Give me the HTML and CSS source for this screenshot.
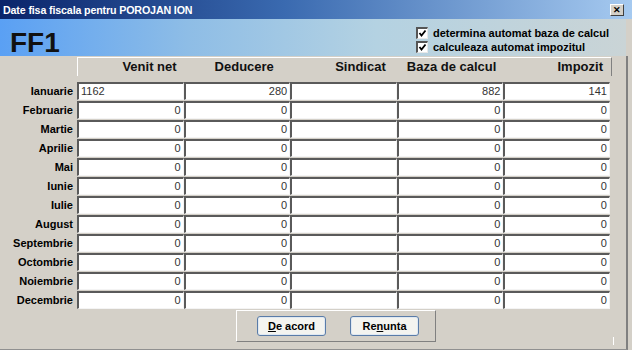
FILE: index.html
```html
<!DOCTYPE html>
<html>
<head>
<meta charset="utf-8">
<link rel="stylesheet" href="styles.css">
</head>
<body>
<div class="window">
  <div class="titlebar">
    <span class="title">Date fisa fiscala pentru POROJAN ION</span>
    <span class="close">✕</span>
  </div>
  <div class="banner">
    <div class="ff1">FF1</div>
    <div class="checks">
      <label class="check"><span class="box"><svg viewBox="0 0 9 9" width="9" height="9"><path d="M1.5 4 L3.5 6.5 L7.5 1.5" fill="none" stroke="#000" stroke-width="1.8"/></svg></span>determina automat baza de calcul</label>
      <label class="check"><span class="box"><svg viewBox="0 0 9 9" width="9" height="9"><path d="M1.5 4 L3.5 6.5 L7.5 1.5" fill="none" stroke="#000" stroke-width="1.8"/></svg></span>calculeaza automat impozitul</label>
    </div>
  </div>
  <div class="content">
    <div class="table">
      <div class="corner"></div>
      <div class="head">
        <span class="h h1">Venit net</span>
        <span class="h h2">Deducere</span>
        <span class="h h3">Sindicat</span>
        <span class="h h4">Baza de calcul</span>
        <span class="h h5">Impozit</span>
      </div>

      <div class="month first">Ianuarie</div>
      <div class="cell left first">1162</div><div class="cell first">280</div><div class="cell first"></div><div class="cell first">882</div><div class="cell first">141</div>

      <div class="month">Februarie</div>
      <div class="cell">0</div><div class="cell">0</div><div class="cell"></div><div class="cell">0</div><div class="cell">0</div>

      <div class="month">Martie</div>
      <div class="cell">0</div><div class="cell">0</div><div class="cell"></div><div class="cell">0</div><div class="cell">0</div>

      <div class="month">Aprilie</div>
      <div class="cell">0</div><div class="cell">0</div><div class="cell"></div><div class="cell">0</div><div class="cell">0</div>

      <div class="month">Mai</div>
      <div class="cell">0</div><div class="cell">0</div><div class="cell"></div><div class="cell">0</div><div class="cell">0</div>

      <div class="month">Iunie</div>
      <div class="cell">0</div><div class="cell">0</div><div class="cell"></div><div class="cell">0</div><div class="cell">0</div>

      <div class="month">Iulie</div>
      <div class="cell">0</div><div class="cell">0</div><div class="cell"></div><div class="cell">0</div><div class="cell">0</div>

      <div class="month">August</div>
      <div class="cell">0</div><div class="cell">0</div><div class="cell"></div><div class="cell">0</div><div class="cell">0</div>

      <div class="month">Septembrie</div>
      <div class="cell">0</div><div class="cell">0</div><div class="cell"></div><div class="cell">0</div><div class="cell">0</div>

      <div class="month">Octombrie</div>
      <div class="cell">0</div><div class="cell">0</div><div class="cell"></div><div class="cell">0</div><div class="cell">0</div>

      <div class="month">Noiembrie</div>
      <div class="cell">0</div><div class="cell">0</div><div class="cell"></div><div class="cell">0</div><div class="cell">0</div>

      <div class="month">Decembrie</div>
      <div class="cell">0</div><div class="cell">0</div><div class="cell"></div><div class="cell">0</div><div class="cell">0</div>
    </div>
    <div class="footer">
      <div class="btnbox">
        <span class="btn"><u>D</u>e acord</span>
        <span class="btn">Re<u>n</u>unta</span>
      </div>
      <span class="grip"></span>
    </div>
  </div>
</div>
</body>
</html>
```
FILE: styles.css
```css
html, body {
  margin: 0;
  padding: 0;
  background: #d4d0c8;
}
body {
  width: 632px;
  height: 350px;
  overflow: hidden;
  font-family: "Liberation Sans", Arial, sans-serif;
}
.window {
  width: 632px;
  height: 350px;
  display: flex;
  flex-direction: column;
  background: #d4d0c8;
}
.titlebar {
  height: 19px;
  flex: none;
  display: flex;
  align-items: center;
  justify-content: space-between;
  background: linear-gradient(90deg, #0a246a 0%, #3a6ab0 45%, #a6caf0 100%);
  padding: 0 8px 0 3px;
}
.title {
  color: #fff;
  font-weight: bold;
  font-size: 10.7px;
  letter-spacing: -0.15px;
}
.close {
  width: 14px;
  height: 12px;
  box-sizing: border-box;
  background: #d4d0c8;
  border-top: 1px solid #fff;
  border-left: 1px solid #fff;
  border-right: 1px solid #404040;
  border-bottom: 1px solid #404040;
  font-size: 9px;
  font-weight: bold;
  line-height: 10px;
  text-align: center;
  color: #000;
}
.banner {
  height: 37px;
  flex: none;
  display: flex;
  justify-content: space-between;
  align-items: flex-start;
  margin-right: 6px;
  background: linear-gradient(90deg, #5aa0f4 0%, #8ebde6 30%, #b4d2e2 60%, #cad4d6 100%);
}
.ff1 {
  font-size: 28px;
  font-weight: bold;
  color: #111;
  line-height: 28px;
  padding: 10px 0 0 10px;
}
.checks {
  display: flex;
  flex-direction: column;
  gap: 2px;
  padding: 8px 17px 0 0;
}
.check {
  display: flex;
  align-items: center;
  gap: 5px;
  font-size: 11px;
  font-weight: bold;
  color: #000;
  height: 12px;
  line-height: 12px;
}
.box {
  width: 12px;
  height: 12px;
  box-sizing: border-box;
  background: #fff;
  border-top: 2px solid #555;
  border-left: 2px solid #555;
  border-right: 1px solid #e8e8e8;
  border-bottom: 1px solid #e8e8e8;
  display: flex;
  align-items: center;
  justify-content: center;
}
.box svg { display: block; }
.content {
  flex: 1;
  display: flex;
  flex-direction: column;
  border-right: 2px solid #808080;
  margin-right: 4px;
  border-bottom: 1px solid #909090;
}
.table {
  display: grid;
  grid-template-columns: 77px repeat(5, 106.6px);
  grid-template-rows: 19px 25px;
  grid-auto-rows: 19px;
  margin-top: 1px;
}
.head {
  grid-column: 2 / 7;
  display: grid;
  grid-template-columns: repeat(5, 106.6px);
  height: 19px;
  box-sizing: border-box;
  border-top: 1px solid #fff;
  border-left: 1px solid #fff;
  border-right: 1px solid #808080;
  margin-right: -2px;
}
.h {
  font-size: 13px;
  font-weight: bold;
  color: #111;
  line-height: 17px;
}
.h1 { text-align: right; padding-right: 8px; }
.h2 { text-align: left; padding-left: 30px; }
.h3 { text-align: right; padding-right: 12px; }
.h4 { text-align: left; padding-left: 9px; }
.h5 { text-align: right; padding-right: 8px; }
.table > .first { margin-top: 6px; }
.month {
  font-size: 11px;
  font-weight: bold;
  color: #000;
  text-align: right;
  padding-right: 4px;
  line-height: 18px;
}
.cell {
  height: 18px;
  box-sizing: border-box;
  background: #fff;
  border-top: 2px solid #5a5a5a;
  border-left: 2px solid #5a5a5a;
  border-bottom: 1px solid #f4f4f4;
  border-right: 1px solid #f4f4f4;
  font-size: 11px;
  line-height: 14px;
  color: #333;
  text-align: right;
  padding: 0 2px;
}
.cell.left { text-align: left; }
.footer {
  flex: 1;
  position: relative;
  display: flex;
  justify-content: flex-start;
  align-items: flex-start;
}
.btnbox {
  margin: 0 0 0 236px;
  width: 200px;
  height: 32px;
  box-sizing: border-box;
  border-top: 1px solid #fff;
  border-left: 1px solid #fff;
  border-right: 1px solid #808080;
  border-bottom: 1px solid #808080;
  display: flex;
  align-items: center;
  gap: 24px;
  padding-left: 20px;
}
.btn {
  width: 69px;
  height: 20px;
  box-sizing: border-box;
  border: 1px solid #5a7ca8;
  border-radius: 3px;
  background: #f4f4f0;
  box-shadow: inset 0 0 0 1px #dfe8f2;
  font-size: 11px;
  font-weight: bold;
  color: #000;
  text-align: center;
  line-height: 18px;
}
.grip {
  position: absolute;
  right: 12px;
  bottom: 4px;
  width: 1px;
  height: 8px;
  background: #fff;
}
```
